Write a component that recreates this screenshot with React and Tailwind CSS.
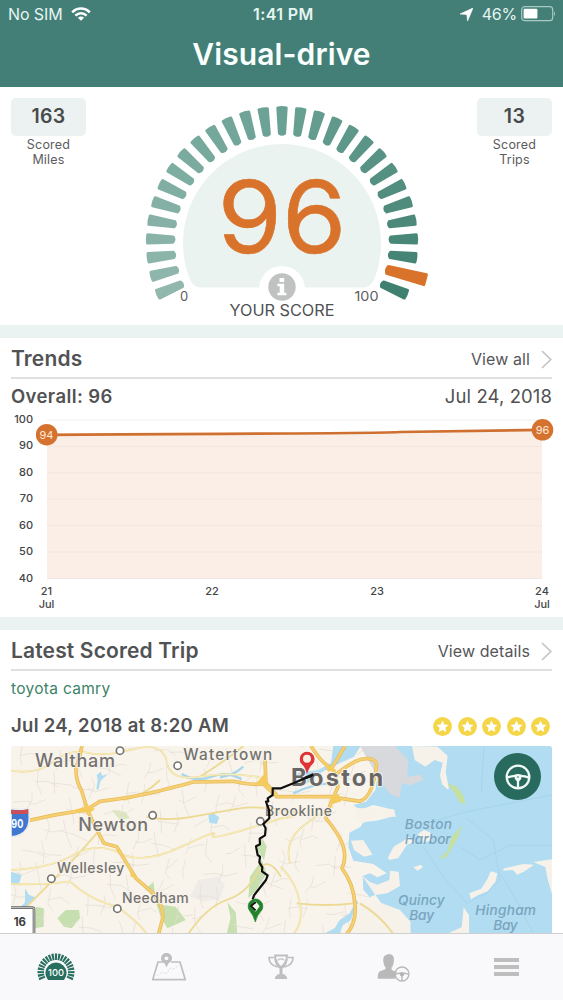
import React from 'react';

const TICK_STEP = 8.05;
const TICKS = Array.from({ length: 29 }, (_, i) => i - 14);
const MIX_FROM = [146, 184, 174];
const MIX_MID = [106, 161, 148];
const MIX_TO = [64, 128, 112];

const tickColor = (i) => {
  const t = i < 0 ? (i + 14) / 14 : i / 14;
  const [a, b] = i < 0 ? [MIX_FROM, MIX_MID] : [MIX_MID, MIX_TO];
  return `rgb(${a.map((v, k) => Math.round(v + (b[k] - v) * t)).join(',')})`;
};

const StatusBar = () => (
  <div className="relative flex h-7 items-center justify-between pl-[8px] pr-[7px] text-[16px] tracking-[0.3px] text-[#e6f5f2]">
    <div className="flex items-center gap-[8px]">
      <span className="tracking-[-0.1px]">No SIM</span>
      <svg width="20" height="14" viewBox="0 0 20 14" fill="none" stroke="#fff" strokeWidth="2.6">
        <path d="M1.2 5.3C6.2.3 13.8.3 18.8 5.3" />
        <path d="M4.4 8.6c3.2-3.1 8-3.1 11.2 0" />
        <path d="M10 13.8 6.9 10.7c1.8-1.6 4.4-1.6 6.2 0z" fill="#fff" stroke="none" />
      </svg>
    </div>
    <span className="absolute left-[253px] font-semibold tracking-[0.4px]">1:41 PM</span>
    <div className="flex items-center">
      <svg className="mr-[9px]" width="13" height="13" viewBox="0 0 13 13">
        <path d="M13 0 7.6 13 6.8 6.5 0 6z" fill="#fff" stroke="#fff" strokeWidth=".6" />
      </svg>
      <span className="tracking-[-0.2px]">46%</span>
      <svg className="ml-[4px]" width="35" height="16" viewBox="0 0 35 16">
        <rect x=".7" y=".7" width="31" height="14" rx="3" fill="none" stroke="#a9cac4" strokeWidth="1.2" />
        <rect x="2.6" y="2.8" width="13.8" height="9.8" rx="1" fill="#fff" />
        <path d="M33 5.2q2 2.5 0 5z" fill="#a9cac4" />
      </svg>
    </div>
  </div>
);

const Stat = ({ value, label }) => (
  <div className="flex w-[75px] flex-col items-center">
    <div className="flex h-[38px] w-full items-center justify-center rounded-[5px] bg-[#ebf2f1] text-[19.5px] font-semibold tracking-[0.3px] text-[#494b4b]">
      {value}
    </div>
    <div className="mt-px w-[60px] text-center text-[12.5px] leading-[15px] tracking-[0.2px] text-[#5c5c5e]">{label}</div>
  </div>
);

const Gauge = () => (
  <svg width="300" height="238" viewBox="131.5 87 300 238">
    {TICKS.map((i) => {
      const current = i === 13;
      const d = current
        ? 'M-5.2 -148 L5.2 -148 L3.6 -109 Q0 -107 -3.6 -109z'
        : 'M-4.3 -134.4 Q0 -135.2 4.3 -134.4 L2.7 -109 Q0 -107 -2.7 -109z';
      const color = current ? '#d9732b' : tickColor(i);
      return (
        <path
          key={i}
          d={d}
          fill={color}
          stroke={color}
          strokeWidth="2.8"
          strokeLinejoin="round"
          transform={`translate(281.5 242.3) rotate(${i * TICK_STEP})`}
        />
      );
    })}
    <path d="M199 287.5Q192 286.5 189 278.3A99 99 0 1 1 374 278.3Q371 286.5 364 287.5z" fill="#ebf3f1" />
    <circle cx="281.5" cy="289" r="23" fill="#fff" />
    <circle cx="281.5" cy="287" r="13.7" fill="#c0c1c1" />
    <path d="M279 278h4.7v4H279zM276.8 283.8h6.9v9h2.2v2.5h-9.1v-2.5h2.4v-6.5h-2.4z" fill="#fff" />
    <text
      x="281.5"
      y="252.5"
      textAnchor="middle"
      fontSize="101"
      textLength="129"
      lengthAdjust="spacingAndGlyphs"
      fill="#d9732b"
      stroke="#d9732b"
      strokeWidth=".6"
    >
      96
    </text>
    <text x="179.5" y="301" fontSize="13" fill="#5c5c5e">0</text>
    <text x="354" y="301" fontSize="13" textLength="24" lengthAdjust="spacingAndGlyphs" fill="#5c5c5e">100</text>
    <text x="281.5" y="316" textAnchor="middle" fontSize="15.5" textLength="105" lengthAdjust="spacingAndGlyphs" fill="#505153">YOUR SCORE</text>
  </svg>
);

const SectionHeader = ({ title, link }) => (
  <div className="mx-[11px] flex h-[41px] items-center justify-between border-b-2 border-[#dfe1e1] pt-[3px]">
    <h2 className="text-[21px] font-semibold tracking-[0.15px] text-[#515254]">{title}</h2>
    <div className="flex items-center gap-[11px] text-[16px] tracking-[0.1px] text-[#55565a]">
      {link}
      <svg width="11" height="19" viewBox="0 0 11 19" fill="none" stroke="#c3c5c6" strokeWidth="1.7">
        <path d="M1 1l8.8 8.5L1 18" />
      </svg>
    </div>
  </div>
);

const TrendChart = () => (
  <svg className="block" width="563" height="207" viewBox="0 410 563 207" fontSize="11" fontWeight="500" fill="#434445">
    <path d="M47 434.8C210 433.6 350 434 400 432L542 429.8V578.5H47z" fill="#faeee6" />
    {[100, 90, 80, 70, 60, 50, 40].map((v, i) => (
      <g key={v}>
        <path d={`M47 ${420 + i * 26.4}H542`} stroke={i ? '#f2e6df' : '#f0f0f0'} />
        <text x="33" y={423 + i * 26.45} textAnchor="end">{v}</text>
      </g>
    ))}
    <path d="M47 434.8C210 433.4 350 434 400 432L542 429.8" fill="none" stroke="#cf7030" strokeWidth="2.7" />
    <circle cx="46.7" cy="434.7" r="10.8" fill="#d6722f" />
    <circle cx="542.5" cy="429.8" r="10.8" fill="#d6722f" />
    <g textAnchor="middle">
      <text x="46.5" y="439" fill="#fdeadb" fontWeight="400">94</text>
      <text x="542.5" y="434" fill="#fdeadb" fontWeight="400">96</text>
      <text x="46.5" y="595">21</text>
      <text x="46.5" y="608">Jul</text>
      <text x="212" y="595">22</text>
      <text x="377" y="595">23</text>
      <text x="542" y="595">24</text>
      <text x="542" y="608">Jul</text>
    </g>
  </svg>
);

const Star = () => (
  <svg width="19" height="19" viewBox="0 0 19 19">
    <circle cx="9.5" cy="9.5" r="9.4" fill="#f4d648" />
    <path d="m9.5 3.5 1.8 3.9 4.2.5-3.1 2.9.8 4.2-3.7-2.1L5.8 15l.8-4.2-3.1-2.9 4.2-.5z" fill="#fff" />
  </svg>
);

// faint street grid, deterministic so it stays put between renders
const STREETS = Array.from({ length: 190 }, (_, i) => {
  const x = 20 + ((i * 197) % 1060);
  const y = 10 + ((i * 131) % 560);
  const a = ((i * 67) % 24) - 12;
  const b = ((i * 43) % 80) - 40;
  return i % 2
    ? `M${x} ${y}l${28 + b / 3} ${a}l${30 + a} ${b / 2}`
    : `M${x} ${y}l${a} ${35 + b / 3}l${b / 2} ${30 + a}`;
}).join('');

const PLACES = [
  ['Waltham', 105, 80, 240, 54],
  ['Watertown', 550, 60, 267, 46],
  ['Newton', 235, 273, 209, 54],
  ['Wellesley', 171, 398, 202, 42],
  ['Needham', 366, 489, 200, 42],
  ['Brookline', 795, 228, 201, 42],
];
const DOTS = [[360, 32], [533, 77], [458, 226], [154, 416], [352, 506], [781, 244]];
const WATER_LABELS = [
  ['Boston', 1214, 266, 142],
  ['Harbor', 1214, 312, 138],
  ['Quincy', 1194, 496, 140],
  ['Bay', 1228, 540, 74],
  ['Hingham', 1426, 526, 182],
  ['Bay', 1480, 571, 73],
];

const TripMap = () => (
  <svg className="block h-[188px] w-[541px]" viewBox="33 18 1623 564" fill="none" strokeLinejoin="round">
    <path d="M33 18h1623v564H33z" fill="#f8f4ec" />
    <path d="M595 420l60-10 20 25-15 40-50 10-40-15zM1140 18h80l50 85-40 60-70-20z" fill="#efece8" />
    <g fill="#c5dfae">
      <path d="M172 535l25-25 40 0 3 25-25 30-23-5zM107 500l24 5v55l-26 5zM440 445l20-20 5 35 22 35 40 5 30 40-55 25-20-35-15-45zM745 475l5-65 35-50 15 40-30 50zM680 582l12-50-10-45 25 30 5 65zM785 290l15 30-8 40-20-30z" />
      <path d="M335 210l40 5 15 20-30 5z" fill="#dce6bf" />
    </g>
    <path d={STREETS} stroke="#e3ddd3" strokeWidth="2" />

    {/* harbor */}
    <g fill="#b1dcf2">
      <path d="M1120 18H1656V582H1233L1228 546 1172 520 1144 490 1126 464 1110 472 1090 450 1088 408 1110 400 1132 412 1160 400 1120 372 1060 362 1045 320 1048 278 1082 260 1090 246 1130 242 1182 228 1184 210 1120 195 1080 210 1060 195 1098 185 1126 150 1134 100 1118 60z" />
      <path d="M1000 18h82l-20 32-40 18-50 25-40 22-52-3 15-14 60-8 38-22zM880 118l55-12 12 15-45 14-25 2z" />
      <path d="M290 105l12-10 5 12 17-5-22 20-7 28-6-3 4-28zM625 225l15-5 18 12-8 20-22-4zM33 395l32 10-8 28-24-5zM75 445l12 20 23 8-25 18-12 25-12-14 14-15zM1070 480l12 25-20 30-33 20-10 25-45 0 30-15 15-25 30-20z" />
    </g>
    <path d="M1080 18H1185L1224 60 1222 110 1262 104 1270 120 1230 136 1206 130 1198 175 1168 160 1140 122z" fill="#d7d9dd" />
    <path d="M1092 350L1062 330 1053 302 1090 300 1118 344zM1085 405L1108 425 1132 434 1168 420 1170 392 1196 395 1200 438 1162 460 1126 465zM1130 484L1200 510 1232 546 1230 582H1040L1068 492zM1068 204L1180 208 1188 230 1126 232 1082 252 1066 230z" fill="#f6f1e9" />
    <g fill="#f7f2e9">
      <path d="M1236 18l8 42 32 20 28-20 24 8-8 38 6 26 16 16 5-2-10-50 6-48-30-28zM1163 354l18-34 34-20 8-12 20 18-22 8-26 40-25 6zM1240 382l22-8 7 8-16 10zM1254 282l18-12 18 7 4 22-22 10zM1408 460l36-14 20-32 8-20 20 6-5 24-24 30-30 12-20 12zM1510 386l60-14 32 2-28 20-22 10-14-14-28 2zM1600 366l56-8v105l-14-50-6-32zM1340 582l45-20 6-60 16 24v56z" />
    </g>
    <path d="M1342 130l30 10 20 30 4 24-18-8-14-26zM1388 256l-18 44-30 50-24 8 26-24 12-42z" fill="#c5e0a0" />
    <path d="M1452 18l-8 140M1656 165L1400 215 1280 250M1270 320L1330 410 1400 490 1460 460 1500 420 1480 300 1400 235M1500 400L1560 500 1600 582M1380 320L1440 360 1530 316H1656" stroke="#9fcde4" strokeWidth="1.6" />
    <path d="M545 102q45 26 90 8t90 8M660 112q40-5 70-32M880 160q60-30 120-30" stroke="#a8d7ed" strokeWidth="7" />

    {/* secondary roads */}
    <g stroke="#ecd992" strokeWidth="5.5">
      <path d="M33 92Q110 105 160 65T260 38 400 28 500 65 600 110 780 112M33 390Q150 385 220 345T360 340 545 320 640 285 780 255 860 235M33 432Q130 435 210 424 270 480 352 500 420 550 440 582M80 500Q150 430 190 390T290 280M440 230Q500 245 580 230T720 205 900 220M565 582Q620 500 680 480T770 400 843 410" />
      <path d="M870 370Q850 300 920 250T1000 200M843 380Q890 430 900 490T880 582M890 490Q980 500 1060 490M1080 490Q1140 525 1180 582M480 120Q430 170 370 180M600 110Q680 60 730 18" />
    </g>
    <g stroke="#fff9d8" strokeWidth="2">
      <path d="M33 92Q110 105 160 65T260 38 400 28 500 65 600 110 780 112M33 390Q150 385 220 345T360 340 545 320 640 285 780 255 860 235M33 432Q130 435 210 424 270 480 352 500 420 550 440 582M870 370Q850 300 920 250T1000 200M843 380Q890 430 900 490T880 582" />
    </g>

    {/* highways */}
    <g stroke="#e8bc5c" strokeWidth="11">
      <path d="M246 18Q240 50 228 82 226 120 246 155L262 210Q280 250 312 310L350 320Q380 370 408 415L460 460Q500 510 484 550L476 582" />
      <path d="M33 255Q90 240 170 224L258 210 300 184Q400 172 480 152T580 126L700 124Q750 136 790 132L830 170H990L1080 184Q1120 170 1130 70" />
      <path d="M795 60L798 130 830 165M933 18Q965 70 995 85L1035 18M1000 90L1014 140 990 195 978 235Q1020 285 1030 320T1026 385Q1060 430 1065 490T1040 582M1130 70Q1118 50 1085 58T1000 110" />
    </g>
    <g stroke="#f6d173" strokeWidth="6">
      <path d="M246 18Q240 50 228 82 226 120 246 155L262 210Q280 250 312 310L350 320Q380 370 408 415L460 460Q500 510 484 550L476 582" />
      <path d="M33 255Q90 240 170 224L258 210 300 184Q400 172 480 152T580 126L700 124Q750 136 790 132L830 170H990L1080 184Q1120 170 1130 70" />
      <path d="M795 60L798 130 830 165M933 18Q965 70 995 85L1035 18M1000 90L1014 140 990 195 978 235Q1020 285 1030 320T1026 385Q1060 430 1065 490T1040 582M1130 70Q1118 50 1085 58T1000 110" />
    </g>
    <path d="M215 212l39-12 4-16 10 18 18 4-18 14zM770 128l27-32 6 46zM388 385l24 30-20-5zM970 68l40 22-26 5zM992 170l24-8 8 22-32 10z" fill="#f5cc5c" />

    {/* road shields */}
    <path d="M33 206q30 5 52 0 10 50-14 71-17 13-38 13z" fill="#4078cf" stroke="#e9eaee" strokeWidth="5" />
    <path d="M33 209q28 5 52-2v15H33z" fill="#cf4e55" />
    <text x="34" y="263" fontSize="34" fontWeight="700" textLength="36" lengthAdjust="spacingAndGlyphs" fill="#fff">90</text>
    <rect x="15" y="503" width="87" height="100" rx="6" fill="#fff" stroke="#646464" strokeWidth="8" />
    <path d="M33 503h65q4 0 4 4v75" stroke="#fff" strokeWidth="2" />
    <text x="41" y="557" fontSize="34" fontWeight="700" fill="#3b3b3b">16</text>

    {DOTS.map(([x, y]) => (
      <circle key={x} cx={x} cy={y} r="11" fill="#fff" stroke="#77756f" strokeWidth="5" />
    ))}
    <g fill="#74726e" stroke="#f8f5ee" strokeWidth="5" paintOrder="stroke" fontWeight="500">
      {PLACES.map(([name, x, y, w, size]) => (
        <text key={name} x={x} y={y} fontSize={size} textLength={w}>{name}</text>
      ))}
      <text x="873" y="138" fontSize="71" fontWeight="700" textLength="277" fill="#696766">Boston</text>
    </g>
    <g fill="#7aa4bd" fontSize="41" fontStyle="italic" fontWeight="500">
      {WATER_LABELS.map(([name, x, y, w]) => (
        <text key={`${name}${x}`} x={x} y={y} textLength={w}>{name}</text>
      ))}
    </g>

    {/* driven route */}
    <path d="M940 104L880 130 843 145H818V165L803 175 805 184 798 185 807 210 808 235 790 252 797 265 795 286 779 296 780 313 768 319 773 345 780 350 778 367 787 382 786 394 803 406 798 420 762 466 758 478" stroke="#0f0f0f" strokeWidth="6.5" />
    <path d="M766 546Q760 525 748 511A22 22 0 1 1 785 511Q771 525 766 546z" fill="#23832d" stroke="#23832d" strokeWidth="2" />
    <path d="M766 482l13 17-12 16-14-16z" fill="#f4f4ea" />
    <path d="M768 486L753 498 767 511" stroke="#111" strokeWidth="5" />
    <path d="M921 103Q917 83 903 70A22 22 0 1 1 940 70Q926 83 921 103z" fill="#df3436" />
    <circle cx="921" cy="55" r="20" fill="#df3436" />
    <circle cx="921" cy="56" r="12" fill="#f6f0e7" />
    <path d="M912 111l28-12-4 12-20 7z" fill="#111" />
  </svg>
);

const Wheel = ({ size, stroke, color }) => (
  <svg width={size} height={size} viewBox="0 0 26 26" fill="none" stroke={color} strokeWidth={stroke}>
    <circle cx="13" cy="13" r="11.3" />
    <path d="M2 13.6Q6 12 10.4 11.8M24 13.6Q20 12 15.6 11.8M13 16v8" />
    <path d="M9.4 10.8Q13 9 16.6 10.8L16.2 15 14.4 17h-2.800L9.800 15z" fill={color} stroke="none" />
    <circle cx="13" cy="13" r="1.1" fill="#7fa79f" stroke="none" />
  </svg>
);

const TabBar = () => (
  <nav className="grid h-[67px] grid-cols-5 justify-items-center border-t border-[#cfcfcf] bg-[#f9f8fa] pt-[19px]">
    <svg width="40" height="30" viewBox="-20 -19 40 30">
      {Array.from({ length: 21 }, (_, i) => (
        <path key={i} d="M-1.2-18.5h2.4L.9-12H-.9z" fill="#286f60" transform={`rotate(${(i - 10) * 11.3})`} />
      ))}
      <path d="M-8 8A10.6 10.6 0 1 1 8 8z" fill="#286f60" />
      <text y="4" textAnchor="middle" fontSize="9.5" fontWeight="500" textLength="16" lengthAdjust="spacingAndGlyphs" fill="#fff">100</text>
    </svg>
    <svg width="36" height="30" viewBox="0 0 36 30" fill="none" stroke="#bfbfc0" strokeWidth="1.7">
      <path d="M12 9H7L1.7 26.7H34.3L29 9H20" strokeLinejoin="round" />
      <path d="m6 23 5-4 4 2 4-6 4 1 5-4" strokeWidth=".5" strokeDasharray="2 1.5" />
      <path d="M15.5 14.5Q15 11 11.3 8.5A5.3 5.3 0 1 1 19.7 8.5Q16 11 15.5 14.5z" fill="#bfbfc0" stroke="none" />
      <circle cx="15.5" cy="5.3" r="1.9" fill="#f9f8fa" stroke="none" />
    </svg>
    <svg width="26" height="30" viewBox="0 0 26 30" fill="none" stroke="#bfbfc0" strokeWidth="1.7">
      <path d="M6 4.5H1Q1 12 9.5 14M20 4.5h5Q25 12 16.5 14" />
      <path d="M6 1.5h14Q20 12.5 14.5 15.5V21q3 0 3.5 2.5h1V26h-12v-2.5H8Q8.5 21 11.5 21v-5.5Q6 12.5 6 1.5z" fill="#bfbfc0" stroke="none" />
      <path d="M8 3.5h10Q17.5 9 13 13 8.5 9 8 3.5z" fill="#f9f8fa" stroke="none" />
      <path d="M9.5 7.5q3-3 6.5-.5" strokeWidth="1.3" />
    </svg>
    <div className="relative -ml-px h-[30px] w-[33px]">
      <svg width="33" height="30" viewBox="0 0 33 30">
        <path d="M11.5 1C16 1 17.5 4 16.8 8Q16.5 13 14.5 14.5L14.8 17 20 19Q17.5 22 18.5 25.7H.8Q.5 19 3.5 18L8.5 16.2V14.5Q6.5 12 6.3 8 5.8 3 9 2z" fill="#b9b9ba" />
      </svg>
      <div className="absolute bottom-[1px] right-0">
        <Wheel size={16} stroke={2.2} color="#b9b9ba" />
      </div>
    </div>
    <div className="mt-[5px] flex w-[25px] flex-col gap-[3px]">
      <div className="h-[4px] bg-[#bebebf]" />
      <div className="h-[4px] bg-[#bebebf]" />
      <div className="h-[4px] bg-[#bebebf]" />
    </div>
  </nav>
);

const App = () => (
  <div className="flex h-[1000px] w-[563px] flex-col overflow-hidden bg-white font-['Inter',sans-serif]">
    <header className="h-[87px] shrink-0 bg-[#437f76]">
      <StatusBar />
      <h1 className="mt-[5px] text-center text-[30px] font-semibold leading-[42px] tracking-[0.1px] text-[#f8fffd]">Visual-drive</h1>
    </header>

    <section className="flex h-[238px] shrink-0 justify-between px-[11px]">
      <div className="pt-[11px]"><Stat value="163" label="Scored Miles" /></div>
      <Gauge />
      <div className="pt-[11px]"><Stat value="13" label="Scored Trips" /></div>
    </section>

    <section className="h-[292px] shrink-0 border-t-[13px] border-[#ebf3f2]">
      <SectionHeader title="Trends" link="View all" />
      <div className="flex h-[31px] items-center justify-between px-[11px] pt-[4px] text-[18.5px] text-[#515254]">
        <span className="font-semibold tracking-[0.4px]">Overall: 96</span>
        <span className="tracking-[0.1px]">Jul 24, 2018</span>
      </div>
      <TrendChart />
    </section>

    <section className="h-[316px] shrink-0 overflow-hidden border-t-[13px] border-[#ebf3f2]">
      <SectionHeader title="Latest Scored Trip" link="View details" />
      <div className="px-[11px]">
        <div className="h-[35px] pt-[7px] text-[15.5px] leading-[22px] tracking-[0.3px] text-[#3c8368]">toyota camry</div>
        <div className="flex h-[40px] items-center justify-between pr-[2px] text-[18.5px] font-semibold text-[#515254]">
          <span className="tracking-[0.3px]">Jul 24, 2018 at 8:20 AM</span>
          <div className="flex gap-[5.5px]">
            {[0, 1, 2, 3, 4].map((n) => <Star key={n} />)}
          </div>
        </div>
        <div className="relative overflow-hidden rounded-t-[3px]">
          <TripMap />
          <button className="absolute right-[11px] top-[7px] flex h-[47px] w-[47px] items-center justify-center rounded-full bg-[#286a5d]">
            <Wheel size={26} stroke={2.3} color="#f1faf7" />
          </button>
        </div>
      </div>
    </section>

    <TabBar />
  </div>
);

export default App;
